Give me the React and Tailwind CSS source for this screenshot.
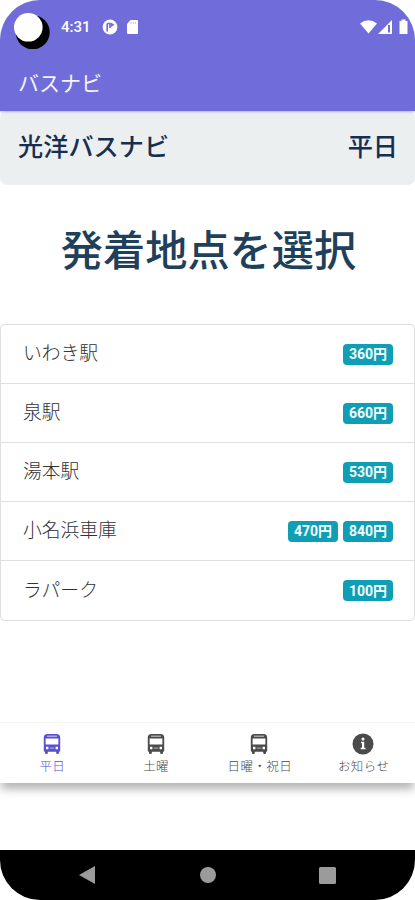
import React from 'react';

const stops = [
  { name: 'いわき駅', fares: ['360円'] },
  { name: '泉駅', fares: ['660円'] },
  { name: '湯本駅', fares: ['530円'] },
  { name: '小名浜車庫', fares: ['470円', '840円'] },
  { name: 'ラパーク', fares: ['100円'] },
];

const tabs = [
  { label: '平日', icon: 'bus', active: true },
  { label: '土曜', icon: 'bus' },
  { label: '日曜・祝日', icon: 'bus' },
  { label: 'お知らせ', icon: 'info' },
];

function BusIcon() {
  return (
    <svg className="h-[20px] w-[18px]" viewBox="0 0 18 20" fill="currentColor">
      <path
        fillRule="evenodd"
        d="M4.500 0h9C16 0 17.200 1.200 17.200 3.500V16.500c0 .8-.5 1.200-1.200 1.300v1.200a1 1 0 0 1-1 1h-.8a1 1 0 0 1-1-1v-1.200H4.800V19a1 1 0 0 1-1 1H3a1 1 0 0 1-1-1v-1.200c-.7-.1-1.200-.5-1.200-1.300V3.500C.8 1.200 2 0 4.500 0ZM4 1.700v.7h10v-.7ZM2.600 4.400V10.500h12.800V4.400ZM3 12.800v2.400h2.400v-2.400ZM12.600 12.800v2.400H15v-2.400Z"
      />
      <path d="M6.700 13.300h4.600v1.700H6.700z" fill="white" opacity=".35" />
    </svg>
  );
}

function InfoIcon() {
  return (
    <svg className="h-[22px] w-[22px]" viewBox="0 0 22 22">
      <circle cx="11" cy="11" r="10.500" fill="currentColor" />
      <path d="M9 8.800h3.200v6h1.300v1.400H8.700v-1.400H10v-4.600H9z" fill="white" />
      <circle cx="11" cy="6" r="1.500" fill="white" />
    </svg>
  );
}

function StatusBar() {
  return (
    <div className="flex h-[54px] items-center text-white">
      <svg className="ml-3 h-[44px] w-[40px] shrink-0" viewBox="0 0 40 44">
        <circle cx="20.700" cy="27.200" r="17" fill="black" />
        <circle cx="16.300" cy="22.300" r="14.300" fill="white" />
      </svg>
      <span className="ml-[9px] w-[29px] whitespace-nowrap font-['Roboto',sans-serif] text-[15px] font-medium">4:31</span>
      <svg className="ml-[12px] h-[16px] w-[16px]" viewBox="0 0 16 16">
        <circle cx="8" cy="8" r="7.400" fill="white" />
        <path d="M5.200 12.500V5.500Q5.200 4.500 6.200 4.500H8v4.500" fill="none" stroke="#706dda" strokeWidth="1.700" />
        <path d="M9 3.500l3.500 2.300L9 8z" fill="#706dda" />
      </svg>
      <svg className="ml-[8px] h-[16px] w-[13px]" viewBox="0 0 13 16">
        <path d="M4.500 1H11a1 1 0 0 1 1 1v12a1 1 0 0 1-1 1H2a1 1 0 0 1-1-1V5z" fill="white" />
        <path d="M5 3v2M7.300 3v2M9.600 3v2" stroke="#c6c4f2" />
      </svg>
      <svg className="ml-auto mr-[6px] h-[16px] w-[49px]" viewBox="0 0 49 16" fill="white">
        <path d="M0 4.500Q8.500-2 17 4.500L8.500 14.500z" />
        <path fillRule="evenodd" d="M32 1v14H18zM28 6v7.500h2V6z" />
        <path d="M39.500 2h2V.5h4V2h2v13h-8V2z" />
      </svg>
    </div>
  );
}

export default function App() {
  return (
    <div className="h-[900px] w-[415px] overflow-hidden bg-white font-['Noto_Sans_CJK_JP',sans-serif]">
      <div className="flex h-full flex-col overflow-hidden rounded-[40px] bg-white">
        <header className="relative z-10 h-[111px] shrink-0 bg-[#706dda] shadow-[0_1px_2px_rgba(112,109,218,0.5)]">
          <StatusBar />
          <div className="flex h-[57px] items-center pl-[18px] text-[21px] text-[#f4f4ff]">バスナビ</div>
        </header>

        <section className="flex h-[74px] shrink-0 items-start justify-between rounded-[7px] bg-[#eceff0] pl-[18px] pr-[17px] pt-[16px] text-[25.2px] font-medium leading-[36px] text-[#172e51]">
          <span>光洋バスナビ</span>
          <span>平日</span>
        </section>

        <h1 className="mt-[33px] h-[60px] shrink-0 pl-[2px] text-center text-[42.2px] font-medium leading-[60px] text-[#1f405b]">
          発着地点を選択
        </h1>

        <ul className="mt-[46px] shrink-0 divide-y divide-[#dfdfdf] rounded-[5px] border border-[#dfdfdf] shadow-[0_0_1px_#e4e4e4]">
          {stops.map((stop) => (
            <li key={stop.name} className="flex h-[59px] items-center justify-between pl-[22px] pr-[21px]">
              <span className="-mt-[3px] text-[18.8px] font-light text-[#303236]">{stop.name}</span>
              <span className="flex gap-[5px]">
                {stop.fares.map((fare) => (
                  <span
                    key={fare}
                    className="flex h-[21px] w-[50px] items-center justify-center whitespace-nowrap rounded-[4px] bg-[#109eb5] font-['Roboto','Noto_Sans_CJK_JP',sans-serif] text-[14px] font-bold leading-none text-[#f4ffff]"
                  >
                    {fare}
                  </span>
                ))}
              </span>
            </li>
          ))}
        </ul>

        <nav className="mt-auto grid h-[61px] shrink-0 grid-cols-4 border-t border-[#f4f4f4] bg-white shadow-[0_7px_9px_-1px_rgba(0,0,0,0.3)]">
          {tabs.map((tab) => (
            <div
              key={tab.label}
              className={`flex flex-col items-center pt-[10px] ${tab.active ? 'text-[#5850cf]' : 'text-[#4b4b4b]'}`}
            >
              <span className="flex h-[22px] items-center">{tab.icon === 'bus' ? <BusIcon /> : <InfoIcon />}</span>
              <span className="mt-[2px] pl-[1px] text-[12.5px] font-light leading-[17px] tracking-[0.4px]">{tab.label}</span>
            </div>
          ))}
        </nav>

        <div className="mt-[67px] flex h-[50px] shrink-0 items-center bg-black">
          <svg className="h-[50px] w-[415px]" viewBox="0 0 415 50" fill="#9b9b9b">
            <path d="M79 25L95 16v18z" />
            <circle cx="208" cy="25" r="8" />
            <rect x="319" y="17" width="17" height="17" rx="1.500" />
          </svg>
        </div>
      </div>
    </div>
  );
}
